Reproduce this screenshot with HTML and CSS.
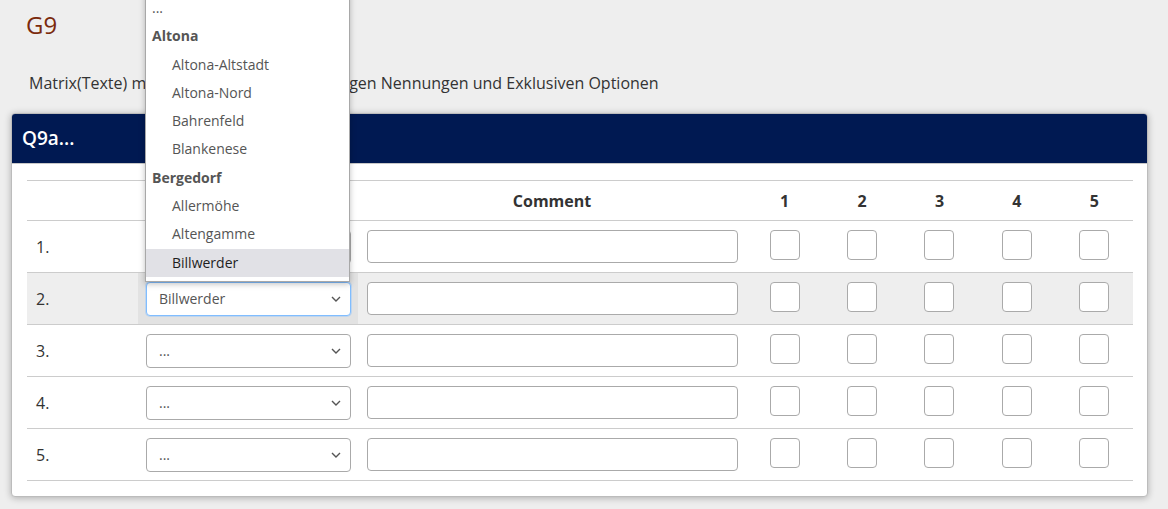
FILE: index.html
```html
<!DOCTYPE html>
<html lang="de">
<head>
<meta charset="utf-8">
<title>G9</title>
<link rel="stylesheet" href="styles.css">
</head>
<body>
<div class="page">
  <h1 class="qid">G9</h1>
  <p class="qtext">Matrix(Texte) mit Dropdown-Listen, ungültigen Nennungen und Exklusiven Optionen</p>
  <div class="card">
    <div class="card-head">Q9a...</div>
    <div class="card-body">
      <table class="matrix">
        <colgroup>
          <col class="c-num"><col class="c-sel"><col class="c-com">
          <col class="c-chk"><col class="c-chk"><col class="c-chk"><col class="c-chk"><col class="c-chk">
        </colgroup>
        <thead>
          <tr><th></th><th></th><th>Comment</th><th>1</th><th>2</th><th>3</th><th>4</th><th>5</th></tr>
        </thead>
        <tbody>
          <tr>
            <td class="num">1.</td>
            <td class="sel"><div class="select"><span>...</span><svg class="chev" width="10" height="6" viewBox="0 0 10 6"><path d="M1 1l4 4 4-4" fill="none" stroke="#555" stroke-width="1.4"/></svg></div></td>
            <td class="com"><div class="input"></div></td>
            <td class="chk"><span class="box"></span></td><td class="chk"><span class="box"></span></td><td class="chk"><span class="box"></span></td><td class="chk"><span class="box"></span></td><td class="chk"><span class="box"></span></td>
          </tr>
          <tr class="active">
            <td class="num">2.</td>
            <td class="sel"><div class="select focus"><span>Billwerder</span><svg class="chev" width="10" height="6" viewBox="0 0 10 6"><path d="M1 1l4 4 4-4" fill="none" stroke="#555" stroke-width="1.4"/></svg></div></td>
            <td class="com"><div class="input"></div></td>
            <td class="chk"><span class="box"></span></td><td class="chk"><span class="box"></span></td><td class="chk"><span class="box"></span></td><td class="chk"><span class="box"></span></td><td class="chk"><span class="box"></span></td>
          </tr>
          <tr>
            <td class="num">3.</td>
            <td class="sel"><div class="select"><span>...</span><svg class="chev" width="10" height="6" viewBox="0 0 10 6"><path d="M1 1l4 4 4-4" fill="none" stroke="#555" stroke-width="1.4"/></svg></div></td>
            <td class="com"><div class="input"></div></td>
            <td class="chk"><span class="box"></span></td><td class="chk"><span class="box"></span></td><td class="chk"><span class="box"></span></td><td class="chk"><span class="box"></span></td><td class="chk"><span class="box"></span></td>
          </tr>
          <tr>
            <td class="num">4.</td>
            <td class="sel"><div class="select"><span>...</span><svg class="chev" width="10" height="6" viewBox="0 0 10 6"><path d="M1 1l4 4 4-4" fill="none" stroke="#555" stroke-width="1.4"/></svg></div></td>
            <td class="com"><div class="input"></div></td>
            <td class="chk"><span class="box"></span></td><td class="chk"><span class="box"></span></td><td class="chk"><span class="box"></span></td><td class="chk"><span class="box"></span></td><td class="chk"><span class="box"></span></td>
          </tr>
          <tr>
            <td class="num">5.</td>
            <td class="sel"><div class="select"><span>...</span><svg class="chev" width="10" height="6" viewBox="0 0 10 6"><path d="M1 1l4 4 4-4" fill="none" stroke="#555" stroke-width="1.4"/></svg></div></td>
            <td class="com"><div class="input"></div></td>
            <td class="chk"><span class="box"></span></td><td class="chk"><span class="box"></span></td><td class="chk"><span class="box"></span></td><td class="chk"><span class="box"></span></td><td class="chk"><span class="box"></span></td>
          </tr>
        </tbody>
      </table>
    </div>
  </div>
</div>
<ul class="dropdown">
  <li class="opt top">...</li>
  <li class="grp">Altona</li>
  <li class="opt">Altona-Altstadt</li>
  <li class="opt">Altona-Nord</li>
  <li class="opt">Bahrenfeld</li>
  <li class="opt">Blankenese</li>
  <li class="grp">Bergedorf</li>
  <li class="opt">Allermöhe</li>
  <li class="opt">Altengamme</li>
  <li class="opt hl">Billwerder</li>
</ul>
</body>
</html>
```

FILE: styles.css
```css
html, body {
  margin: 0;
  padding: 0;
}
body {
  background: #eeeeee;
  font-family: "Open Sans", "Noto Sans", sans-serif;
  color: #333;
  position: relative;
  overflow: hidden;
  height: 509px;
}
.page {
  padding: 0 20px 0 11px;
}
.qid {
  margin: 0;
  padding: 9px 0 0 15px;
  font-size: 24px;
  font-weight: 400;
  line-height: 32px;
  color: #7b2a0c;
}
.qtext {
  margin: 30px 0 0 0;
  padding-left: 18px;
  font-size: 16px;
  line-height: 24px;
  color: #333;
}
.card {
  margin-top: 18px;
  background: #fff;
  border: 1px solid #bcbcbc;
  border-radius: 4px;
  box-shadow: 0 1px 7px rgba(0, 0, 0, 0.28);
  overflow: hidden;
}
.card-head {
  height: 49px;
  line-height: 49px;
  background: #001952;
  color: #fff;
  font-size: 19px;
  font-weight: 600;
  padding-left: 10px;
  border-bottom: 1px solid #c8c8c8;
}
.card-body {
  padding: 16px 14px 15px 15px;
}
.matrix {
  width: 100%;
  border-collapse: collapse;
  table-layout: fixed;
}
.c-num { width: 111px; }
.c-sel { width: 220px; }
.c-com { width: 388px; }
.matrix thead tr {
  height: 40px;
  border-top: 1px solid #cccccc;
  border-bottom: 1px solid #cccccc;
}
.matrix th {
  font-size: 16px;
  font-weight: 700;
  color: #333;
  text-align: center;
  padding: 0;
}
.matrix tbody tr {
  height: 52px;
  border-bottom: 1px solid #cccccc;
}
.matrix td {
  padding: 0;
  vertical-align: middle;
}
.matrix tr.active {
  background: #eeeeee;
}
.matrix tr.active td.sel {
  background: #e2e2e2;
}
.num {
  padding-left: 9px !important;
  font-size: 16px;
  color: #333;
}
.sel {
  padding: 0 7px 0 8px !important;
}
.select {
  height: 32px;
  border: 1px solid #aaaaaa;
  border-radius: 4px;
  background: #fff;
  display: flex;
  align-items: center;
  justify-content: space-between;
  padding: 0 9px 0 12px;
  font-size: 14px;
  color: #555;
}
.select.focus {
  border-color: #80bdff;
  box-shadow: 0 0 0 1px rgba(128, 189, 255, 0.35);
}
.chev {
  display: block;
}
.com {
  padding: 0 8px 0 9px !important;
}
.input {
  height: 31px;
  border: 1px solid #aaaaaa;
  border-radius: 4px;
  background: #fff;
}
.chk {
  text-align: center;
}
.box {
  display: inline-block;
  width: 28px;
  height: 28px;
  border: 1px solid #aaaaaa;
  border-radius: 4px;
  background: #fff;
  vertical-align: middle;
  margin-top: -3px;
}
.dropdown {
  position: absolute;
  left: 145px;
  top: -7px;
  width: 203px;
  margin: 0;
  padding: 0 0 4px 0;
  list-style: none;
  background: #fff;
  border: 1px solid #a8a8a8;
  box-shadow: 0 2px 6px rgba(0, 0, 0, 0.25);
  font-size: 14px;
}
.dropdown li {
  height: 28.3px;
  line-height: 28.3px;
  white-space: nowrap;
}
.dropdown .grp {
  font-weight: 700;
  color: #555;
  padding-left: 6px;
}
.dropdown .opt {
  color: #555;
  padding-left: 26px;
}
.dropdown .opt.top {
  padding-left: 6px;
}
.dropdown .opt.hl {
  background: #e1e1e6;
  color: #1e1e1e;
}
```
